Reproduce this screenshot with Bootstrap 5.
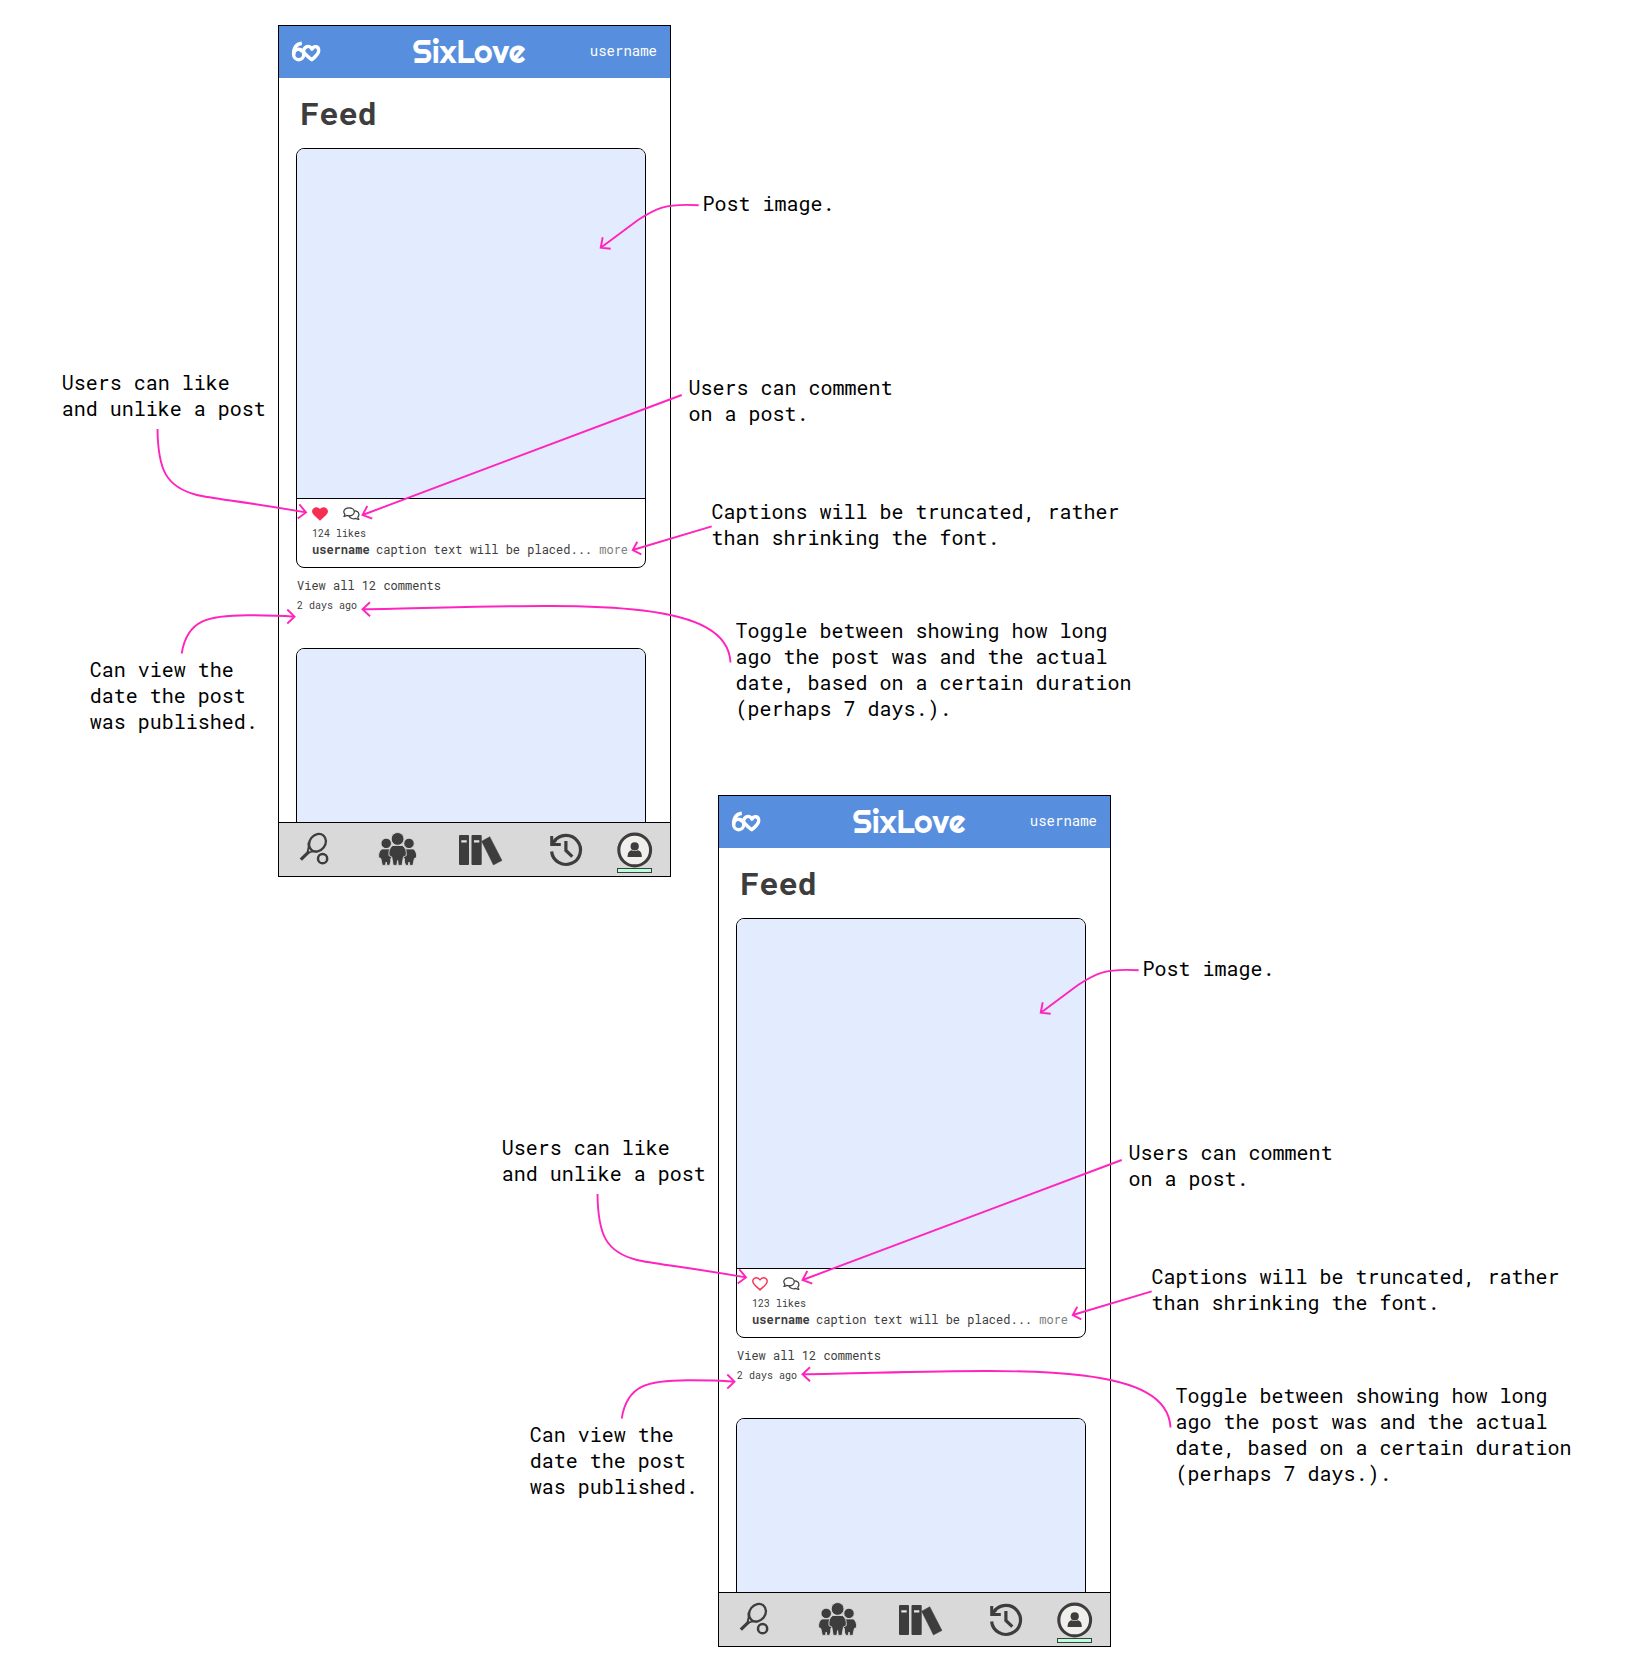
<!DOCTYPE html>
<html lang="en">
<head>
<meta charset="utf-8">
<meta name="viewport" content="width=device-width, initial-scale=1">
<title>SixLove feed</title>
<link href="https://cdn.jsdelivr.net/npm/bootstrap@5.3.0/dist/css/bootstrap.min.css" rel="stylesheet">
<style>
body{background:#fff;color:#000;font-family:"Roboto Mono","DejaVu Sans Mono","Liberation Mono",monospace}
.board{width:1635px;height:1672px}
.phone{width:393px;height:852px;border:1px solid #000;color:#3d3d3d}
.phone-a{left:278px;top:25px}
.phone-b{left:718px;top:795px}
.topbar{height:52px;background:#578ede;padding:0 13px 0 12px}
.logo{margin-bottom:1px}
.brand{font-family:Righteous,Lato,sans-serif;font-size:32px;line-height:50px;margin:0 0 2px 91.5px}
.who{font-size:14px;margin-bottom:4px}
.feed{padding:14px 24px 0 17px}
.feed-title{font-size:32px;line-height:42px;font-weight:700;margin:0 0 14px 4px}
.post{border:1px solid #000;border-radius:8px;width:350px}
.shot{background:#e3ebff;height:350px;border-bottom:1px solid #000}
.details{height:68px;padding:8px 0 0 15px}
.acts{height:14px;gap:14.5px}
.likes{font-size:10px;line-height:14px;margin-top:6px}
.cap-line{font-size:12px;line-height:16px;white-space:pre}
.cap-line b{margin-right:-.8px}
.more{color:#808080}
.all{font-size:12px;line-height:16px;margin:9px 0 0 1px}
.ago{font-size:10px;line-height:14px;margin:6px 0 0 1px}
.next{margin-top:35px;height:420px}
.next .shot{border-radius:7px 7px 0 0}
.tabs{height:54px;background:#d9d9d9;border-top:1px solid #000;padding-left:19px}
.g1{margin-left:47px}.g2{margin-left:40px}.g3{margin-left:46px}.g4{margin-left:32px}
.note{font-size:20px;line-height:26px;white-space:pre;margin:0}
.notes-a{left:0;top:0}
.notes-b{left:440px;top:765px}
.n-img{left:702.6px;top:190px}.n-com{left:688.6px;top:374px}.n-like{left:61.7px;top:369px}
.n-cap{left:711.4px;top:498px}.n-tog{left:735.5px;top:617px}.n-date{left:89.7px;top:656px}
</style>
<script src="https://cdn.jsdelivr.net/npm/bootstrap@5.3.0/dist/js/bootstrap.bundle.min.js"></script>
</head>
<body>
<svg class="d-none">
  <symbol id="mark60" viewBox="291 41 30 21">
    <g fill="none" stroke="#fff" stroke-width="3.400" stroke-linejoin="round">
      <ellipse cx="298.700" cy="54.500" rx="5.100" ry="5.200"/>
      <path d="M293.600 54.900C293.400 48.500 295.800 44 301.800 43.200"/>
      <path d="M299.500 50.200C301.500 50 303 51.200 304 52.500M303.400 51C304.300 46.600 309.300 44.300 312 49.100C314.300 45 318.900 46.400 318.700 50.800C318.500 54.300 315.200 56.700 311.800 59.700C308.400 57 304.200 54 303.400 51Z"/>
    </g>
  </symbol>
  <symbol id="heart" viewBox="0 0 16 14"><path d="M8 13.700 1.600 7.700C-1.200 4.900 .2 1.300 3 .5 5 0 7 .700 8 2.300 9 .700 11 0 13 .5c2.800.8 4.200 4.400 1.400 7.200Z"/></symbol>
  <symbol id="heartline" viewBox="0 0 16 14"><path d="M8 12.900C6.500 11.400 3.500 9.100 2 7.100C-.2 4.200 1 .8 4.300.8 6 .8 7.300 1.700 8 3 8.700 1.700 10 .8 11.700.8 15 .8 16.200 4.200 14 7.100 12.500 9.100 9.500 11.400 8 12.900Z" fill="none" stroke="#f62e52" stroke-width="1.400" stroke-linejoin="round"/></symbol>
  <symbol id="chat" viewBox="0 0 17 14">
    <g fill="none" stroke="#3d3d3d" stroke-width="1.250" stroke-linejoin="round">
      <path d="M6 .8C9 .8 11.300 2.500 11.300 4.800S9 8.800 6 8.800C5.200 8.800 4.400 8.700 3.700 8.400 2.900 9 1.900 9.400.9 9.400 1.500 8.800 1.800 8 1.900 7.300 1.200 6.600.8 5.700.8 4.800.8 2.500 3.100.8 6 .8Z"/>
      <path d="M11.300 3.900C14 4 15.900 5.600 15.900 7.700 15.900 8.600 15.500 9.500 14.800 10.200 14.900 10.900 15.300 11.700 15.900 12.400 14.800 12.400 13.800 12 13 11.400 10.500 12.300 6.900 11.600 5.900 8.800"/>
    </g>
  </symbol>
  <symbol id="racket" viewBox="298 823 32 53">
    <g fill="none" stroke="#3d3d3d">
      <ellipse cx="317.500" cy="842.700" rx="7.800" ry="9.400" stroke-width="2.300" transform="rotate(38 317.500 842.700)"/>
      <path d="M308.300 842.500C309.300 847 308.400 849.700 307.500 852.200M317.200 851.600C313.500 850.600 310.500 851.900 308 852.900" stroke-width="1.800"/>
      <path d="M300.800 859.700 309.300 851.300" stroke-width="3.200"/>
      <circle cx="322.600" cy="858.700" r="4.600" stroke-width="2.500"/>
    </g>
  </symbol>
  <symbol id="people" viewBox="377 823 41 53">
    <g fill="#3d3d3d" stroke="#d9d9d9" stroke-width=".9">
      <g id="sidefig"><circle cx="386.200" cy="843.400" r="5.200"/><path d="M382 848.900H391L393.500 857 390.800 858.500V862L389.500 865.400H386.900L386.200 862 385.500 865.400H382.300L380.800 858.500 378.600 857.500C378.300 853.500 379.500 850 382 848.900Z"/></g>
      <use href="#sidefig" transform="matrix(-1 0 0 1 795.200 0)"/>
      <path d="M392.800 845.500H402.400C405.500 847 406.800 851.500 406.200 855.700L403.500 856.800 402 865.400H398.300L397.600 860.500 396.900 865.400H393.200L391.700 856.800 389 855.700C388.400 851.500 389.700 847 392.800 845.500Z"/>
      <circle cx="397.600" cy="838.900" r="6.400"/>
    </g>
  </symbol>
  <symbol id="books" viewBox="458 823 45 53">
    <g fill="#3d3d3d"><rect x="459" y="835" width="10" height="30" rx="1"/><rect x="471.500" y="835" width="10.200" height="30" rx="1"/><path d="M481.600 841.200 489.800 836.700 502 860.500 493.400 865Z" stroke="#3d3d3d" stroke-width=".4"/></g>
    <path d="M461.300 840.200H466.700V842.400H461.300ZM474 840.200H479.300V842.400H474Z" fill="#e4e4e4"/>
  </symbol>
  <symbol id="hist" viewBox="549 823 35 53">
    <g fill="none" stroke="#3d3d3d" stroke-width="3.200">
      <path d="M551.600 851.500A14.500 14.500 0 1 0 554.200 841.500"/>
      <path d="M551.700 836V844.500H560.800" stroke-width="3"/><path d="M552 843.500 556 839.500"/>
      <path d="M565.900 841V850.500L572.300 856.600"/>
    </g>
  </symbol>
  <symbol id="me" viewBox="616 823 38 53">
    <circle cx="634.700" cy="850" r="15.900" fill="#f1efec" stroke="#3d3d3d" stroke-width="3.100"/>
    <circle cx="634.700" cy="846.400" r="4.100" fill="#3d3d3d"/>
    <path d="M627.600 857C627.500 852.500 629.500 850.600 631.700 850.200Q634.700 852 637.700 850.200C640 850.600 642 852.500 641.800 857Z" fill="#3d3d3d"/>
    <rect x="617.500" y="868.500" width="34" height="4" fill="#b8ffda" stroke="#3d3d3d"/>
  </symbol>
  <symbol id="arrows" viewBox="0 0 800 700">
    <g fill="none" stroke="#ff24bd" stroke-width="1.900">
      <path d="M157.500 429C158 470 166 487 197 495C214 499 240 501 306 512.400M299.300 504.300 306 512.400 297.700 518.500"/>
      <path d="M681.700 395 362.500 515M367.300 506 362.500 515 372.300 518.700"/>
      <path d="M698.700 205.300C665 203 655 209 638 220C630 226 615 237 600.700 247.700M602.700 237.300 600.700 247.700 610.700 248.700"/>
      <path d="M711.700 526.300 632.700 550M637.300 541.700 632.700 550 641.300 554.300"/>
      <path d="M181.700 653.500C187 620 208 615 250 615.300C270 615.300 285 616 294.500 616.700M287.300 609.500 294.500 616.700 287.300 623.500"/>
      <path d="M730.500 662.500C727 592 560 606 362.500 609.300M370 602.300 362.500 609.300 370 616.300"/>
    </g>
  </symbol>
</svg>

<main class="board position-relative overflow-hidden">
  <section class="phone phone-a position-absolute d-flex flex-column overflow-hidden">
    <header class="topbar d-flex align-items-center text-white flex-shrink-0">
      <svg class="logo" width="30" height="21"><use href="#mark60"/></svg><span class="brand">SixLove</span><span class="who ms-auto">username</span>
    </header>
    <div class="feed flex-grow-1 overflow-hidden">
      <h1 class="feed-title">Feed</h1>
      <article class="post overflow-hidden">
        <div class="shot"></div>
        <div class="details">
          <div class="acts d-flex"><svg width="16" height="14" fill="#f62e52"><use href="#heart"/></svg><svg width="17" height="14"><use href="#chat"/></svg></div>
          <div class="likes">124 likes</div>
          <div class="cap-line"><b>username</b> caption text will be placed... <span class="more">more</span></div>
        </div>
      </article>
      <div class="all">View all 12 comments</div>
      <div class="ago">2 days ago</div>
      <article class="post next"><div class="shot"></div></article>
    </div>
    <nav class="tabs d-flex flex-shrink-0">
      <svg width="32" height="53"><use href="#racket"/></svg><svg class="g1" width="41" height="53"><use href="#people"/></svg><svg class="g2" width="45" height="53"><use href="#books"/></svg><svg class="g3" width="35" height="53"><use href="#hist"/></svg><svg class="g4" width="38" height="53"><use href="#me"/></svg>
    </nav>
  </section>

  <section class="phone phone-b position-absolute d-flex flex-column overflow-hidden">
    <header class="topbar d-flex align-items-center text-white flex-shrink-0">
      <svg class="logo" width="30" height="21"><use href="#mark60"/></svg><span class="brand">SixLove</span><span class="who ms-auto">username</span>
    </header>
    <div class="feed flex-grow-1 overflow-hidden">
      <h1 class="feed-title">Feed</h1>
      <article class="post overflow-hidden">
        <div class="shot"></div>
        <div class="details">
          <div class="acts d-flex"><svg width="16" height="14"><use href="#heartline"/></svg><svg width="17" height="14"><use href="#chat"/></svg></div>
          <div class="likes">123 likes</div>
          <div class="cap-line"><b>username</b> caption text will be placed... <span class="more">more</span></div>
        </div>
      </article>
      <div class="all">View all 12 comments</div>
      <div class="ago">2 days ago</div>
      <article class="post next"><div class="shot"></div></article>
    </div>
    <nav class="tabs d-flex flex-shrink-0">
      <svg width="32" height="53"><use href="#racket"/></svg><svg class="g1" width="41" height="53"><use href="#people"/></svg><svg class="g2" width="45" height="53"><use href="#books"/></svg><svg class="g3" width="35" height="53"><use href="#hist"/></svg><svg class="g4" width="38" height="53"><use href="#me"/></svg>
    </nav>
  </section>

  <div class="notes-a position-absolute">
    <svg width="800" height="700"><use href="#arrows"/></svg>
    <p class="note n-img position-absolute">Post image.</p>
    <p class="note n-com position-absolute">Users can comment
on a post.</p>
    <p class="note n-like position-absolute">Users can like
and unlike a post</p>
    <p class="note n-cap position-absolute">Captions will be truncated, rather
than shrinking the font.</p>
    <p class="note n-tog position-absolute">Toggle between showing how long
ago the post was and the actual
date, based on a certain duration
(perhaps 7 days.).</p>
    <p class="note n-date position-absolute">Can view the
date the post
was published.</p>
  </div>
  <div class="notes-b position-absolute">
    <svg width="800" height="700"><use href="#arrows"/></svg>
    <p class="note n-img position-absolute">Post image.</p>
    <p class="note n-com position-absolute">Users can comment
on a post.</p>
    <p class="note n-like position-absolute">Users can like
and unlike a post</p>
    <p class="note n-cap position-absolute">Captions will be truncated, rather
than shrinking the font.</p>
    <p class="note n-tog position-absolute">Toggle between showing how long
ago the post was and the actual
date, based on a certain duration
(perhaps 7 days.).</p>
    <p class="note n-date position-absolute">Can view the
date the post
was published.</p>
  </div>
</main>
</body>
</html>
